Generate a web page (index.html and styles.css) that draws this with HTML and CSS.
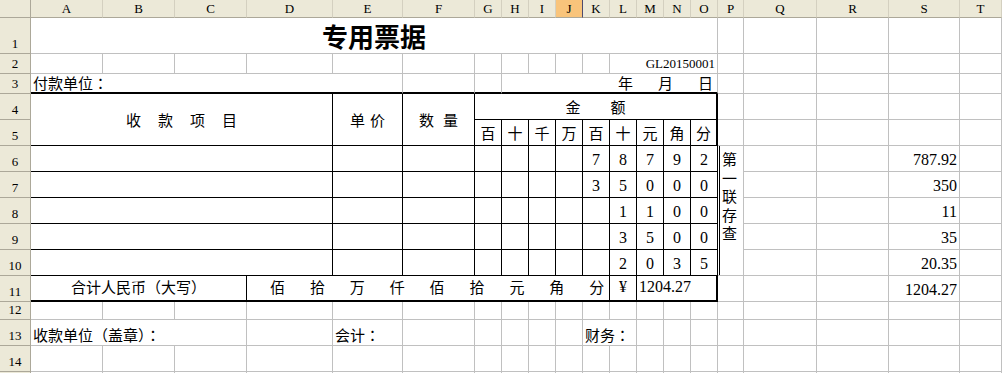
FILE: index.html
```html
<!DOCTYPE html>
<html lang="zh-CN">
<head>
    <meta charset="UTF-8">
    <meta name="viewport" content="width=device-width, initial-scale=1.0">
    <title>专用票据</title>
    <link rel="stylesheet" href="styles.css">
</head>
<body>
    <table class="sheet">
        <colgroup>
            <col class="col_head">
            <col class="col_72"><col class="col_72"><col class="col_72">
            <col class="col_86">
            <col class="col_70">
            <col class="col_72">
            <col class="col_27"><col class="col_27"><col class="col_27">
            <col class="col_27"><col class="col_27"><col class="col_27">
            <col class="col_27"><col class="col_27"><col class="col_27">
            <col class="col_26">
            <col class="col_73">
            <col class="col_72">
            <col class="col_71">
            <col class="col_42">
        </colgroup>
        <tr class="head_row">
            <th class="corner"></th>
            <th class="col_name">A</th><th class="col_name">B</th><th class="col_name">C</th>
            <th class="col_name">D</th><th class="col_name">E</th><th class="col_name">F</th>
            <th class="col_name">G</th><th class="col_name">H</th><th class="col_name">I</th>
            <th class="col_name active">J</th><th class="col_name">K</th><th class="col_name">L</th>
            <th class="col_name">M</th><th class="col_name">N</th><th class="col_name">O</th>
            <th class="col_name">P</th><th class="col_name">Q</th><th class="col_name">R</th>
            <th class="col_name">S</th><th class="col_name">T</th>
        </tr>
        <tr class="title_row">
            <th class="row_name">1</th>
            <td colspan="15" class="title">专用票据</td>
            <td></td><td></td><td></td><td></td><td></td>
        </tr>
        <tr class="thin_row">
            <th class="row_name">2</th>
            <td></td><td></td><td></td><td></td><td></td><td></td>
            <td></td><td></td><td></td><td></td><td></td>
            <td colspan="4" class="right code">GL20150001</td>
            <td></td><td></td><td></td><td></td><td></td>
        </tr>
        <tr class="thin_row">
            <th class="row_name">3</th>
            <td colspan="5" class="heavy_b">付款单位<span class="colon" lang="zh-Hant">：</span></td>
            <td class="heavy_b"></td><td class="heavy_b"></td>
            <td colspan="8" class="heavy_b right date">年<span class="gap">月</span><span class="gap">日</span></td>
            <td></td><td></td><td></td><td></td><td></td>
        </tr>
        <tr>
            <th class="row_name">4</th>
            <td colspan="4" rowspan="2" class="line_r line_b middle center item_head">收款项目</td>
            <td rowspan="2" class="line_r line_b middle center price_head">单价</td>
            <td rowspan="2" class="line_r line_b middle center qty_head">数量</td>
            <td colspan="9" class="heavy_r line_b middle center sum_head">金额</td>
            <td></td><td></td><td></td><td></td><td></td>
        </tr>
        <tr>
            <th class="row_name">5</th>
            <td class="line_r line_b middle center">百</td>
            <td class="line_r line_b middle center">十</td>
            <td class="line_r line_b middle center">千</td>
            <td class="line_r line_b middle center">万</td>
            <td class="line_r line_b middle center">百</td>
            <td class="line_r line_b middle center">十</td>
            <td class="line_r line_b middle center">元</td>
            <td class="line_r line_b middle center">角</td>
            <td class="heavy_r line_b middle center">分</td>
            <td></td><td></td><td></td><td></td><td></td>
        </tr>
        <tr>
            <th class="row_name">6</th>
            <td colspan="4" class="line_r line_b"></td>
            <td class="line_r line_b"></td>
            <td class="line_r line_b"></td>
            <td class="line_r line_b"></td>
            <td class="line_r line_b"></td>
            <td class="line_r line_b"></td>
            <td class="line_r line_b"></td>
            <td class="line_r line_b center num">7</td>
            <td class="line_r line_b center num">8</td>
            <td class="line_r line_b center num">7</td>
            <td class="line_r line_b center num">9</td>
            <td class="line_r line_b center num">2</td>
            <td rowspan="5" class="stub">第一联存查</td>
            <td></td><td></td><td class="right num">787.92</td><td></td>
        </tr>
        <tr>
            <th class="row_name">7</th>
            <td colspan="4" class="line_r line_b"></td>
            <td class="line_r line_b"></td>
            <td class="line_r line_b"></td>
            <td class="line_r line_b"></td>
            <td class="line_r line_b"></td>
            <td class="line_r line_b"></td>
            <td class="line_r line_b"></td>
            <td class="line_r line_b center num">3</td>
            <td class="line_r line_b center num">5</td>
            <td class="line_r line_b center num">0</td>
            <td class="line_r line_b center num">0</td>
            <td class="line_r line_b center num">0</td>
            <td></td><td></td><td class="right num">350</td><td></td>
        </tr>
        <tr>
            <th class="row_name">8</th>
            <td colspan="4" class="line_r line_b"></td>
            <td class="line_r line_b"></td>
            <td class="line_r line_b"></td>
            <td class="line_r line_b"></td>
            <td class="line_r line_b"></td>
            <td class="line_r line_b"></td>
            <td class="line_r line_b"></td>
            <td class="line_r line_b"></td>
            <td class="line_r line_b center num">1</td>
            <td class="line_r line_b center num">1</td>
            <td class="line_r line_b center num">0</td>
            <td class="line_r line_b center num">0</td>
            <td></td><td></td><td class="right num">11</td><td></td>
        </tr>
        <tr>
            <th class="row_name">9</th>
            <td colspan="4" class="line_r line_b"></td>
            <td class="line_r line_b"></td>
            <td class="line_r line_b"></td>
            <td class="line_r line_b"></td>
            <td class="line_r line_b"></td>
            <td class="line_r line_b"></td>
            <td class="line_r line_b"></td>
            <td class="line_r line_b"></td>
            <td class="line_r line_b center num">3</td>
            <td class="line_r line_b center num">5</td>
            <td class="line_r line_b center num">0</td>
            <td class="line_r line_b center num">0</td>
            <td></td><td></td><td class="right num">35</td><td></td>
        </tr>
        <tr>
            <th class="row_name">10</th>
            <td colspan="4" class="line_r line_b"></td>
            <td class="line_r line_b"></td>
            <td class="line_r line_b"></td>
            <td class="line_r line_b"></td>
            <td class="line_r line_b"></td>
            <td class="line_r line_b"></td>
            <td class="line_r line_b"></td>
            <td class="line_r line_b"></td>
            <td class="line_r line_b center num">2</td>
            <td class="line_r line_b center num">0</td>
            <td class="line_r line_b center num">3</td>
            <td class="line_r line_b center num">5</td>
            <td></td><td></td><td class="right num">20.35</td><td></td>
        </tr>
        <tr>
            <th class="row_name">11</th>
            <td colspan="3" class="line_r heavy_b total center">合计人民币（大写）</td>
            <td colspan="8" class="line_r heavy_b total words">佰拾万仟佰拾元角<span class="last">分</span></td>
            <td class="line_r heavy_b total center yen">¥</td>
            <td colspan="3" class="heavy_r heavy_b total num">1204.27</td>
            <td></td><td></td><td></td><td class="right num">1204.27</td><td></td>
        </tr>
        <tr class="gap_row">
            <th class="row_name">12</th>
            <td></td><td></td><td></td><td></td><td></td><td></td><td></td>
            <td></td><td></td><td></td><td></td><td></td><td></td><td></td>
            <td></td><td></td><td></td><td></td><td></td><td></td>
        </tr>
        <tr>
            <th class="row_name">13</th>
            <td colspan="3">收款单位（盖章）<span class="colon" lang="zh-Hant">：</span></td>
            <td></td>
            <td>会计<span class="colon" lang="zh-Hant">：</span></td>
            <td></td><td></td><td></td><td></td><td></td>
            <td colspan="2">财务<span class="colon" lang="zh-Hant">：</span></td>
            <td></td><td></td><td></td><td></td><td></td><td></td><td></td><td></td>
        </tr>
        <tr>
            <th class="row_name">14</th>
            <td></td><td></td><td></td><td></td><td></td><td></td><td></td>
            <td></td><td></td><td></td><td></td><td></td><td></td><td></td>
            <td></td><td></td><td></td><td></td><td></td><td></td>
        </tr>
        <tr>
            <th class="row_name"></th>
            <td></td><td></td><td></td><td></td><td></td><td></td><td></td>
            <td></td><td></td><td></td><td></td><td></td><td></td><td></td>
            <td></td><td></td><td></td><td></td><td></td><td></td>
        </tr>
    </table>
</body>
</html>
```

FILE: styles.css
```css
*{
    margin: 0;
    padding: 0;
    box-sizing: border-box;
}
body{
    width: 1002px;
    height: 373px;
    overflow: hidden;
    background: #fff;
    font-family: "Noto Sans CJK SC", sans-serif;
    color: #000;
}

/* sheet grid */
.sheet{
    width: 1002px;
    table-layout: fixed;
    border-collapse: separate;
    border-spacing: 0;
}
.col_head{ width: 31px; }
.col_72{ width: 72px; }
.col_86{ width: 86px; }
.col_70{ width: 70px; }
.col_27{ width: 27px; }
.col_26{ width: 26px; }
.col_73{ width: 73px; }
.col_71{ width: 71px; }
.col_42{ width: 42px; }

.sheet tr{ height: 26px; }
.sheet .head_row{ height: 18px; }
.sheet .title_row{ height: 36px; }
.sheet .thin_row{ height: 20px; }
.sheet .gap_row{ height: 18px; }

.sheet td{
    border-right: 1px solid #c0c0c0;
    border-bottom: 1px solid #c0c0c0;
    padding: 0 2px 1px;
    font-size: 15px;
    line-height: 18px;
    vertical-align: bottom;
    white-space: nowrap;
}

/* centred full-width colon, as in the printed form */
.colon{
    font-family: "Noto Sans CJK TC", sans-serif;
}

/* row and column headers */
.sheet th{
    background: #ece9d8;
    border-right: 1px solid #aca899;
    border-bottom: 1px solid #aca899;
    font-family: "Liberation Serif", serif;
    font-weight: normal;
    font-size: 13px;
    color: #000;
}
.col_name{
    text-align: center;
    vertical-align: middle;
    line-height: 16px;
    border-right-color: #d4d0c0 !important;
}
.col_name.active{
    background: #f9c47b;
    border-right-color: #4d4a6e !important;
}
.row_name{
    text-align: center;
    vertical-align: bottom;
    line-height: 15px;
    padding-bottom: 2px;
}

/* borders of the form */
.sheet .line_r{ border-right-color: #000; }
.sheet .line_b{ border-bottom-color: #000; }
.sheet .heavy_r{ border-right: 2px solid #000; }
.sheet .heavy_b{ border-bottom: 2px solid #000; padding-bottom: 0; }

.sheet .center{ text-align: center; }
.sheet .right{ text-align: right; }
.sheet .middle{ vertical-align: middle; padding-bottom: 0; }

.sheet .title{
    text-align: center;
    font-size: 26px;
    font-weight: bold;
    line-height: 30px;
    padding-bottom: 2px;
}
.sheet .code{
    font-family: "Liberation Serif", serif;
    font-size: 13px;
    line-height: 14px;
    padding-bottom: 2px;
}
.sheet .date{
    padding-right: 4px;
}
.date .gap{
    margin-left: 25px;
}
.sheet .num{
    font-family: "Liberation Serif", serif;
    font-size: 16px;
    line-height: 16px;
    padding-bottom: 3px;
}

.item_head{
    letter-spacing: 17px;
    text-indent: 17px;
}
.price_head{
    letter-spacing: 5px;
    text-indent: 5px;
}
.qty_head{
    letter-spacing: 9px;
    text-indent: 9px;
}
.sum_head{
    letter-spacing: 30px;
    text-indent: 30px;
}

.sheet .total{
    vertical-align: middle;
    padding-bottom: 3px;
}
.sheet .words{
    padding-left: 23px;
    padding-right: 0;
    letter-spacing: 24.9px;
}
.words .last{
    letter-spacing: 0;
}
.sheet .yen{
    font-family: "Liberation Serif", serif;
    font-size: 16px;
}

/* 第一联存查 running down beside the form */
.sheet .stub{
    vertical-align: top;
    white-space: normal;
    padding: 4px 0 0 4px;
    line-height: 18.5px;
    box-shadow: inset 1px 0 0 #fff, inset 2px 0 0 #000;
}
```
